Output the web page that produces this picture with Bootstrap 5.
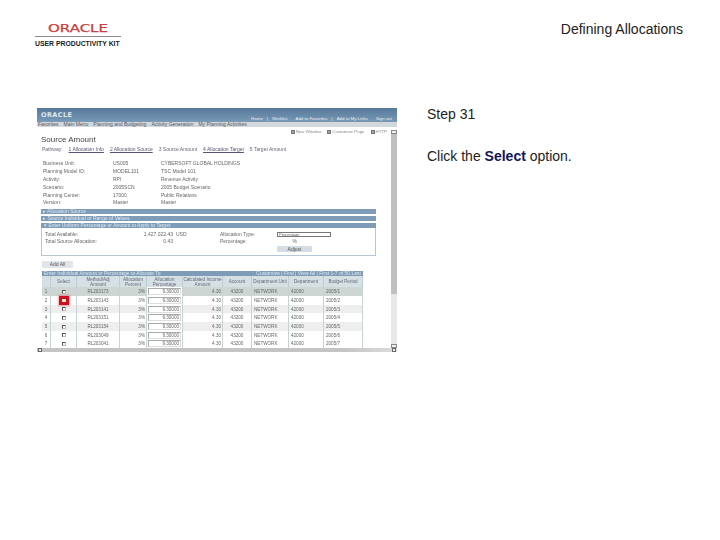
<!doctype html>
<html lang="en"><head><meta charset="utf-8"><title>Defining Allocations</title>
<link href="https://cdn.jsdelivr.net/npm/bootstrap@5.3.0/dist/css/bootstrap.min.css" rel="stylesheet">
<style>
html,body{height:540px;overflow:hidden;background:#fff}
body{font-family:"Liberation Sans",Arial,sans-serif;color:#111}
.pg-head{padding:22px 37px 0 35px;height:108px}
.logo-box{width:86px;padding-top:2px}
.logo-word{font:400 10px/9px "DejaVu Sans",sans-serif;color:#c9403f;text-align:center;transform:scaleX(1.5);-webkit-text-stroke:.25px #c9403f}
.logo-rule{height:1px;background:#8b8b8b;margin:3px 0 3px}
.logo-kit{font:700 6.85px/7px "Liberation Sans",sans-serif;color:#222;white-space:nowrap}
.pg-title{font-size:14px;line-height:17px;color:#222;margin-top:-1px}
.pg-main{padding-left:37px}
.shot{width:360px;height:244px;overflow:hidden;font-size:5px;line-height:6px;color:#555;filter:blur(.4px);flex:none}
.ps-bar{height:14px;background:linear-gradient(#55799b,#7a9ab5);color:#e8eef3;padding:0 4px}
.ps-logo{font:700 6.5px/14px "DejaVu Sans",sans-serif;letter-spacing:.4px;color:#dfe7ee}
.ps-links{gap:4px;line-height:22px;padding-right:1px;font-size:4.4px}
.ps-nav{height:5px;background:#d2d8dc;line-height:5px;padding-left:1px;gap:5px;white-space:nowrap;color:#556}
.ps-body{height:221px;min-height:0}
.ps-content{width:354px;overflow:hidden;padding:0 4px}
.ps-tools{height:8px;line-height:6px;gap:6px;padding-top:2px;padding-right:0;color:#888;white-space:nowrap;font-size:4.4px}
.tool-ico{display:inline-block;width:4px;height:4px;background:#8fa6b5;border:1px solid #777;margin-right:1px;vertical-align:-1px}
.ps-h{font-size:8px;line-height:9px;color:#444;padding-top:0}
.ps-path{gap:6px;line-height:6px;margin-top:2px;white-space:nowrap;color:#667;padding-left:1px}
.ps-path u{color:#557}
.ps-fields{margin:8px 0 2px;padding-left:2px}
.fld{height:7.9px;line-height:7.9px;color:#666}
.fld>span:nth-child(1){width:70px}.fld>span:nth-child(2){width:48px}
.sec{width:335px;height:5px;background:#7e9cb8;color:#dfe8ef;line-height:5px;padding-left:2px;margin-bottom:2px;white-space:nowrap}
.alloc{width:335px;height:33px;border:1px solid #b6c8d6;margin-bottom:5px}
.alloc .sec{width:auto;margin:-1px -1px 3px;padding-left:3px}
.alloc-row{height:7px;line-height:7px;padding-left:3px;color:#666}
.alloc-row>span:nth-child(1){width:62px}.alloc-row>span:nth-child(2){width:66px;text-align:right}.alloc-row>span:nth-child(3){width:47px;padding-left:3px}
.alloc-row>span:nth-child(4){width:57px}
.sel-box{width:54px;height:5px;border:1px solid #777;background:#fff;line-height:3px;font-size:4px;padding-left:1px}
.pct-box{width:20px;text-align:right}
.calc-btn{width:35px;height:6px;background:#d5dce2;border-radius:1px;text-align:center;line-height:6px;margin:1px 0 0 235px;color:#555}
.add-btn{width:31px;height:7px;line-height:7px;background:#e2e6ea;border:0;border-radius:1px;text-align:center;margin:0 0 3px 1px;color:#555;display:block;padding:0;font-size:5px}
.ws-strip{width:321px;height:5px;line-height:5px;background:#7e9cb8;color:#dfe8ef;margin-left:1px;padding:0 2px;white-space:nowrap}
.ws{width:321px;margin-left:1px;border-collapse:separate;border-spacing:0;table-layout:fixed;font-size:4.6px}
.ws th{height:11px;line-height:5px;background:#d5e0e4;font-weight:400;text-align:center;border-right:1px solid #bfcdd2;padding:0;color:#667;white-space:nowrap;overflow:hidden}
.ws td{height:8.7px;line-height:5px;padding:0 1px;border-right:1px solid #c8d3d6;text-align:center;white-space:nowrap;overflow:hidden;color:#666;box-sizing:border-box}
.ws tr.t1 td{background:#cdd6d2}.ws tr.t2 td{background:#eee}
.ws td.rt{text-align:right}.ws td.lf{text-align:left;padding-left:2px}
.ws td.pc{background:#fff!important;padding:0 1px}
.pc-in{border:1px solid #aaa;border-right-color:#ddd;border-bottom-color:#ddd;height:7px;line-height:5px;text-align:right;padding-right:1px;background:#fff}
.ck{display:inline-block;width:4px;height:4px;border:1px solid #555;border-right-color:#bbb;border-bottom-color:#bbb;background:#fff;vertical-align:middle}
.ck-on{width:4px;height:3px;background:#ffe9c8;box-shadow:0 0 0 3px #cf1020,0 0 2px 4px rgba(207,16,32,.35);position:relative;display:inline-block;vertical-align:middle}
.ws td.hl{overflow:visible}
.vs{width:6px;margin-top:3px;background:#e8e8e8}
.vs-top{height:4px;background:#eee;border:1px solid #888;flex:none}
.vs-thumb{height:160px;background:#bfbfbf;flex:none}
.vs-rest{flex:1}
.hs{height:4px;background:linear-gradient(90deg,#c4c4c4 85%,#ddd);padding:0 1px}
.sb-btn{width:4px;height:4px;background:#eee;border:1px solid #666}
.side{padding-left:30px;font-size:14px;color:#222}
.side p{line-height:15px;margin:0}
.side .stp{margin-top:-1px;margin-bottom:27px}
.side b{color:#14145a}
</style></head>
<body>
<div class="pg-head d-flex justify-content-between align-items-start">
  <div class="logo-box">
    <div class="logo-word">ORACLE</div>
    <div class="logo-rule"></div>
    <div class="logo-kit">USER PRODUCTIVITY KIT</div>
  </div>
  <div class="pg-title">Defining Allocations</div>
</div>
<div class="pg-main d-flex align-items-start">
  <div class="shot d-flex flex-column">
    <div class="ps-bar d-flex justify-content-between">
      <span class="ps-logo">ORACLE</span>
      <span class="ps-links d-flex"><span>Home</span><span>|</span><span>Worklist</span><span></span><span>Add to Favorites</span><span>|</span><span>Add to My Links</span><span></span><span>Sign out</span></span>
    </div>
    <div class="ps-nav d-flex"><span>Favorites</span><span>Main Menu</span><span>Planning and Budgeting</span><span>Activity Generation</span><span>My Planning Activities</span></div>
    <div class="ps-body d-flex">
      <div class="ps-content">
        <div class="ps-tools d-flex justify-content-end"><span><i class="tool-ico"></i>New Window</span><span><i class="tool-ico"></i>Customize Page</span><span><i class="tool-ico"></i>HTTP</span></div>
        <div class="ps-h">Source Amount</div>
        <div class="ps-path d-flex"><span>Pathway:</span><u>1 Allocation Info</u><u>2 Allocation Source</u><span>3 Source Amount</span><u>4 Allocation Target</u><span>5 Target Amount</span></div>
        <div class="ps-fields">
          <div class="fld d-flex"><span>Business Unit:</span><span>US005</span><span>CYBERSOFT GLOBAL HOLDINGS</span></div>
          <div class="fld d-flex"><span>Planning Model ID:</span><span>MODEL101</span><span>TSC Model 101</span></div>
          <div class="fld d-flex"><span>Activity:</span><span>RPI</span><span>Revenue Activity</span></div>
          <div class="fld d-flex"><span>Scenario:</span><span>2005SCN</span><span>2005 Budget Scenario</span></div>
          <div class="fld d-flex"><span>Planning Center:</span><span>17000</span><span>Public Relations</span></div>
          <div class="fld d-flex"><span>Version:</span><span>Master</span><span>Master</span></div>
        </div>
        <div class="sec">▸ Allocation Source</div>
        <div class="sec">▸ Source Individual or Range of Values</div>
        <div class="alloc">
          <div class="sec">▾ Enter Uniform Percentage or Amount to Apply to Target</div>
          <div class="alloc-row d-flex align-items-center"><span>Total Available:</span><span>1,427,022.43</span><span>USD</span><span>Allocation Type:</span><span class="sel-box">Percentage</span></div>
          <div class="alloc-row d-flex align-items-center"><span>Total Source Allocation:</span><span>0.43</span><span></span><span>Percentage:</span><span class="pct-box">%</span></div>
          <div class="calc-btn">Adjust</div>
        </div>
        <button type="button" class="add-btn">Add All</button>
        <div class="ws-strip d-flex justify-content-between"><span>Enter Individual Amount or Percentage to Allocate To</span><span>Customize | Find | View All | First 1-7 of 50 Last</span></div>
        <table class="ws">
          <colgroup><col style="width:9px"><col style="width:26px"><col style="width:43px"><col style="width:27px"><col style="width:36px"><col style="width:40px"><col style="width:29px"><col style="width:37px"><col style="width:35px"><col style="width:39px"></colgroup>
          <thead><tr><th></th><th>Select</th><th>Method/Adj<br>Amount</th><th>Allocation<br>Percent</th><th>Allocation<br>Percentage</th><th>Calculated Income<br>Amount</th><th>Account</th><th>Department Unit</th><th>Department</th><th>Budget Period</th></tr></thead>
          <tbody>
            <tr class="t1"><td>1</td><td><span class="ck"></span></td><td>RL203173</td><td class="rt">3%</td><td class="pc"><div class="pc-in">9.30000</div></td><td class="rt">4.30</td><td>43200</td><td class="lf">NETWORK</td><td class="lf">42000</td><td class="lf">2005/1</td></tr>
            <tr><td>2</td><td class="hl"><span class="ck-on"></span></td><td>RL203143</td><td class="rt">3%</td><td class="pc"><div class="pc-in">9.30000</div></td><td class="rt">4.30</td><td>43200</td><td class="lf">NETWORK</td><td class="lf">42000</td><td class="lf">2005/2</td></tr>
            <tr class="t2"><td>3</td><td><span class="ck"></span></td><td>RL203141</td><td class="rt">3%</td><td class="pc"><div class="pc-in">9.30000</div></td><td class="rt">4.30</td><td>43200</td><td class="lf">NETWORK</td><td class="lf">42000</td><td class="lf">2005/3</td></tr>
            <tr><td>4</td><td><span class="ck"></span></td><td>RL203151</td><td class="rt">3%</td><td class="pc"><div class="pc-in">9.30000</div></td><td class="rt">4.30</td><td>43200</td><td class="lf">NETWORK</td><td class="lf">42000</td><td class="lf">2005/4</td></tr>
            <tr class="t2"><td>5</td><td><span class="ck"></span></td><td>RL203154</td><td class="rt">3%</td><td class="pc"><div class="pc-in">9.30000</div></td><td class="rt">4.30</td><td>43200</td><td class="lf">NETWORK</td><td class="lf">42000</td><td class="lf">2005/5</td></tr>
            <tr><td>6</td><td><span class="ck"></span></td><td>RL203049</td><td class="rt">3%</td><td class="pc"><div class="pc-in">9.30000</div></td><td class="rt">4.30</td><td>43200</td><td class="lf">NETWORK</td><td class="lf">42000</td><td class="lf">2005/6</td></tr>
            <tr><td>7</td><td><span class="ck"></span></td><td>RL203041</td><td class="rt">3%</td><td class="pc"><div class="pc-in">9.30000</div></td><td class="rt">4.30</td><td>43200</td><td class="lf">NETWORK</td><td class="lf">42000</td><td class="lf">2005/7</td></tr>
          </tbody>
        </table>
      </div>
      <div class="vs d-flex flex-column"><div class="vs-top"></div><div class="vs-thumb"></div><div class="vs-rest"></div><div class="vs-top"></div></div>
    </div>
    <div class="hs d-flex justify-content-between"><div class="sb-btn"></div><div class="sb-btn"></div></div>
  </div>
  <div class="side">
    <p class="stp">Step 31</p>
    <p>Click the <b>Select</b> option.</p>
  </div>
</div>
<script src="https://cdn.jsdelivr.net/npm/bootstrap@5.3.0/dist/js/bootstrap.bundle.min.js"></script>
</body></html>
